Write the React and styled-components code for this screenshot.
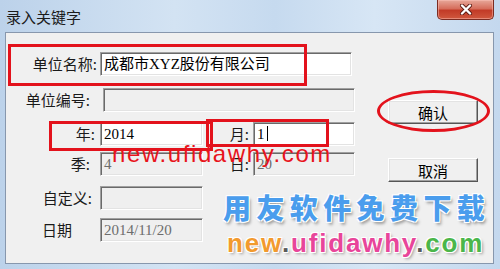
import React from 'react'
import styled, { createGlobalStyle } from 'styled-components'

const GlobalStyle = createGlobalStyle`
  html, body { margin: 0; padding: 0; background: #fff; }
  body { width: 500px; height: 269px; overflow: hidden; }
`

const CJK = `"Noto Sans CJK SC", "Liberation Sans", sans-serif`

const Window = styled.div`
  width: 500px;
  height: 269px;
  box-sizing: border-box;
  display: flex;
  flex-direction: column;
  padding: 0 6px 5px 5px;
  background: linear-gradient(to right, #bcd2ea 0%, #d3e3f3 35%, #c6daef 55%, #d7e6f5 75%, #c4d8ee 100%);
  font-family: ${CJK};
`

const TitleBar = styled.div`
  flex: none;
  height: 32px;
  display: flex;
  align-items: flex-start;
  justify-content: space-between;
`

const Title = styled.div`
  margin: 8px 0 0 1px;
  font-size: 15px;
  line-height: 17px;
  color: #1b1b1b;
`

const CloseButton = styled.div`
  width: 57px;
  height: 20px;
  box-sizing: border-box;
  display: flex;
  align-items: center;
  justify-content: center;
  border: 1px solid #7b2c22;
  border-top: none;
  border-radius: 0 0 5px 5px;
  background: linear-gradient(#e7a89a 0%, #d66e5c 45%, #c23b27 55%, #d0583e 100%);
  box-shadow: inset 0 0 0 1px rgba(255, 200, 190, 0.45);
`

const Client = styled.div`
  flex: 1;
  position: relative;
  display: flex;
  align-items: flex-start;
  background: #f0f0f0;
  border: 1px solid #8797ad;
`

const Form = styled.div`
  display: grid;
  grid-template-columns: 94px 103px 50px 102px;
  grid-template-rows: 36px 34px 30px 34px 32px 24px;
  padding-top: 19px;
`

const Label = styled.div`
  height: 24px;
  line-height: 24px;
  font-size: 15px;
  color: #1a1a1a;
  text-align: right;
  padding-right: ${p => p.$pr || 0}px;
  white-space: nowrap;
`

const Field = styled.div`
  height: 24px;
  box-sizing: border-box;
  padding-left: 3px;
  line-height: 22px;
  font-size: 15px;
  font-family: "Liberation Serif", "Noto Sans CJK SC", serif;
  white-space: nowrap;
  overflow: hidden;
  color: ${p => (p.$disabled ? '#6d6d6d' : '#000')};
  background: ${p => (p.$disabled ? '#efefef' : '#fff')};
  border-top: 1px solid #a0a0a0;
  border-left: 1px solid #a0a0a0;
  border-bottom: 1px solid #fff;
  border-right: 1px solid #fff;
  box-shadow: inset 1px 1px 0 #6a6a6a, inset -1px -1px 0 #e3e3e3;
  grid-column: ${p => p.$span || 'auto'};
  margin: ${p => p.$m || '0'};
`

const Caret = styled.span`
  display: inline-block;
  width: 1px;
  height: 15px;
  margin-left: 2px;
  background: #000;
  vertical-align: -2px;
`

const ButtonColumn = styled.div`
  display: flex;
  flex-direction: column;
  gap: 34px;
  margin-left: 33px;
  padding-top: 67px;
`

const Button = styled.div`
  width: 90px;
  height: 24px;
  box-sizing: border-box;
  display: flex;
  align-items: center;
  justify-content: center;
  font-size: 15px;
  color: #000;
  background: #f0f0f0;
  border: 1px solid;
  border-color: #fff #555 #555 #fff;
  box-shadow: inset -1px -1px 0 #a0a0a0, inset 1px 1px 0 #e3e3e3;
`

const Mark = styled.div`
  position: absolute;
  box-sizing: border-box;
  border: 3px solid #e3121c;
  border-radius: ${p => (p.$oval ? '50%' : '0')};
  left: ${p => p.$x}px;
  top: ${p => p.$y}px;
  width: ${p => p.$w}px;
  height: ${p => p.$h}px;
  pointer-events: none;
`

const RedStamp = styled.div`
  position: absolute;
  left: 106px;
  top: 109px;
  font-family: "Liberation Sans", Arial, sans-serif;
  font-size: 24px;
  line-height: 24px;
  letter-spacing: 1.6px;
  color: #e8141c;
  white-space: nowrap;
`

const Slogan = styled.div`
  position: absolute;
  left: 217px;
  top: 157px;
  font-family: ${CJK};
  font-weight: 900;
  font-size: 28px;
  line-height: 34px;
  letter-spacing: 5.4px;
  color: #4a9ded;
  white-space: nowrap;
  text-shadow: 1px 1px 0 #fff, -1px -1px 0 #fff, 1px -1px 0 #fff, -1px 1px 0 #fff,
    2px 3px 3px rgba(0, 0, 0, 0.35);
`

const Site = styled.div`
  position: absolute;
  left: 221px;
  top: 197px;
  font-family: "Liberation Sans", Arial, sans-serif;
  font-weight: bold;
  font-size: 26px;
  line-height: 26px;
  letter-spacing: 1.8px;
  white-space: nowrap;
  text-shadow: 1px 1px 0 #fff, -1px -1px 0 #fff, 1px -1px 0 #fff, -1px 1px 0 #fff,
    2px 2px 3px rgba(0, 0, 0, 0.35);
`

const Part = styled.span`
  color: ${p => p.$c};
`

export default function App() {
  return (
    <>
      <GlobalStyle />
      <Window>
        <TitleBar>
          <Title>录入关键字</Title>
          <CloseButton>
            <svg width="14" height="11" viewBox="0 0 14 11">
              <path d="M3 1.5 L11 9.5 M11 1.5 L3 9.5" stroke="#5a1a12" strokeWidth="4" strokeLinecap="round" />
              <path d="M3 1.5 L11 9.5 M11 1.5 L3 9.5" stroke="#fff" strokeWidth="2.4" strokeLinecap="round" />
            </svg>
          </CloseButton>
        </TitleBar>
        <Client>
          <Form>
            <Label $pr={3}>单位名称:</Label>
            <Field $span="2 / 5" $m="0 3px 0 0">成都市XYZ股份有限公司</Field>

            <Label $pr={10}>单位编号:</Label>
            <Field $span="2 / 5" $m="0 0 0 3px" $disabled />

            <Label $pr={5}>年:</Label>
            <Field>2014</Field>
            <Label $pr={4}>月:</Label>
            <Field>1<Caret /></Field>

            <Label $pr={10}>季:</Label>
            <Field $disabled>4</Field>
            <Label $pr={4}>日:</Label>
            <Field $disabled>20</Field>

            <Label $pr={8}>自定义:</Label>
            <Field $disabled />
            <span />
            <span />

            <Label $pr={28}>日期</Label>
            <Field $disabled>2014/11/20</Field>
          </Form>

          <ButtonColumn>
            <Button>确认</Button>
            <Button>取消</Button>
          </ButtonColumn>

          <Mark $x={2} $y={11} $w={299} $h={42} />
          <Mark $x={43} $y={88} $w={164} $h={30} />
          <Mark $x={200} $y={86} $w={123} $h={28} />
          <Mark $oval $x={371} $y={57} $w={113} $h={42} />

          <RedStamp>new.ufidawhy.com</RedStamp>
          <Slogan>用友软件免费下载</Slogan>
          <Site>
            <Part $c="#f29a2e">new</Part>
            <Part $c="#5a5a5a">.</Part>
            <Part $c="#e8459a">ufidawhy</Part>
            <Part $c="#5a5a5a">.</Part>
            <Part $c="#4bb64a">com</Part>
          </Site>
        </Client>
      </Window>
    </>
  )
}
